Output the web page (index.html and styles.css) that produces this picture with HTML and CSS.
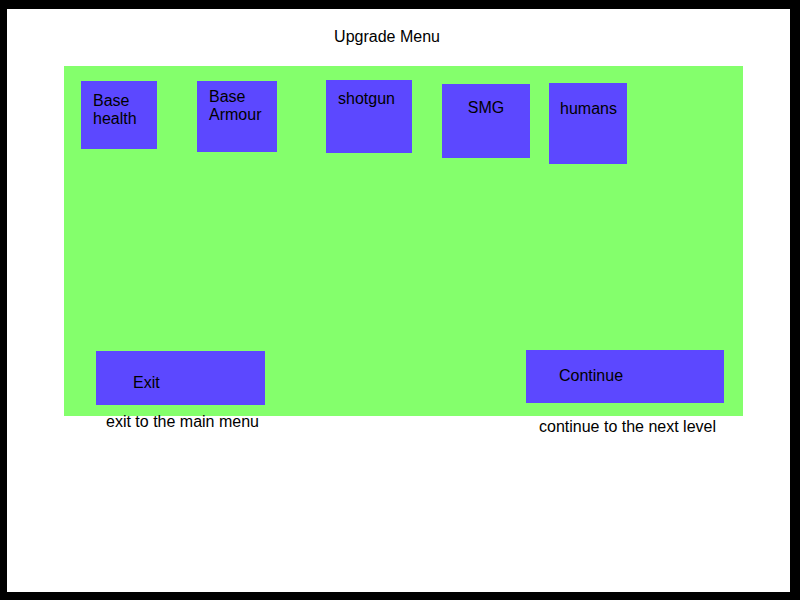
FILE: index.html
```html
<!DOCTYPE html>
<html lang="en">
<head>
<meta charset="utf-8">
<meta name="viewport" content="width=device-width, initial-scale=1">
<title>Upgrade Menu</title>
<link rel="stylesheet" href="styles.css">
</head>
<body>
<main class="screen">
  <h1 class="title">Upgrade Menu</h1>
  <section class="panel" aria-label="Upgrades">
    <button type="button" class="box health">Base health</button>
    <button type="button" class="box armour">Base Armour</button>
    <button type="button" class="box shotgun">shotgun</button>
    <button type="button" class="box smg">SMG</button>
    <button type="button" class="box humans">humans</button>
  </section>
  <div class="actions">
    <div class="action">
      <button type="button" class="box exit" aria-describedby="exit-note">Exit</button>
      <p class="note exit-note" id="exit-note">exit to the main menu</p>
    </div>
    <div class="action">
      <button type="button" class="box continue" aria-describedby="continue-note">Continue</button>
      <p class="note continue-note" id="continue-note">continue to the next level</p>
    </div>
  </div>
</main>
</body>
</html>
```
FILE: styles.css
```css
* {
  box-sizing: border-box;
}

body {
  margin: 0;
  background: #000;
  color: #000;
  font: 16px/18px "Liberation Sans", Arial, sans-serif;
}

.screen {
  min-height: 100vh;
  padding: 19px 47px 0 57px;
  border: solid #000;
  border-width: 9px 10px 8px 7px;
  background: #fff;
}

.title {
  margin: 0 0 20px;
  padding-right: 33px;
  font-size: 16px;
  font-weight: 400;
  text-align: center;
}

.panel {
  display: flex;
  align-items: flex-start;
  min-height: 350px;
  padding: 14px 17px;
  background: #84ff6c;
}

.box {
  display: flex;
  flex-shrink: 0;
  align-items: flex-start;
  margin: 0;
  padding: 11px 12px;
  border: 0;
  border-radius: 0;
  background: #5c48ff;
  color: inherit;
  font: inherit;
  text-align: left;
  cursor: pointer;
}

.health {
  width: 76px;
  height: 68px;
  margin: 1px 40px 0 0;
}

.armour {
  width: 80px;
  height: 71px;
  margin: 1px 49px 0 0;
  padding-top: 7px;
}

.shotgun {
  width: 86px;
  height: 73px;
  margin-right: 30px;
  padding-top: 10px;
}

.smg {
  justify-content: center;
  width: 88px;
  height: 74px;
  margin: 4px 19px 0 0;
  padding-top: 15px;
}

.humans {
  width: 78px;
  height: 81px;
  margin-top: 3px;
  padding: 17px 11px;
}

/* The captions hang over the lower edge of the panel. */
.actions {
  display: flex;
  justify-content: space-between;
  margin-top: -66px;
  padding: 0 19px 0 32px;
}

.exit {
  width: 169px;
  height: 54px;
  margin-top: 1px;
  padding: 23px 37px;
}

.continue {
  width: 198px;
  height: 53px;
  padding: 17px 33px;
}

.note {
  margin: 0;
}

.exit-note {
  padding: 8px 0 0 10px;
}

.continue-note {
  padding: 15px 0 0 13px;
}
```
